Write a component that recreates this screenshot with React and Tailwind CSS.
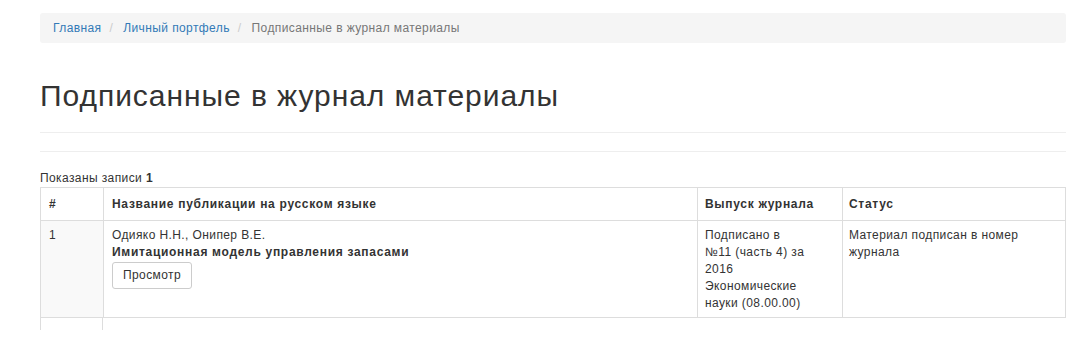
const crumbs = [
  { label: "Главная", href: "#" },
  { label: "Личный портфель", href: "#" },
  { label: "Подписанные в журнал материалы" },
];

const rows = [
  {
    n: 1,
    authors: "Одияко Н.Н., Онипер В.Е.",
    title: "Имитационная модель управления запасами",
    issue: ["Подписано в", "№11 (часть 4) за", "2016", "Экономические", "науки (08.00.00)"],
    status: "Материал подписан в номер журнала",
  },
];

export default function App() {
  return (
    <div className="min-h-[364px] bg-white pl-[40px] pr-[10px] pt-[13px] text-[12px] leading-[17px] tracking-[0.4px] text-[#333] font-['Liberation_Sans',Arial,sans-serif]">
      {/* Breadcrumb */}
      <ol className="flex h-[30px] items-center bg-[#f5f5f5] px-[13px] pt-[1px] rounded-[3px]">
        {crumbs.map((c, i) => (
          <li key={c.label} className="flex items-center">
            {i > 0 && <span className="pl-[8px] pr-[10px] text-[#ccc]">/</span>}
            {c.href ? (
              <a href={c.href} className="text-[#337ab7]">{c.label}</a>
            ) : (
              <span className="text-[#777]">{c.label}</span>
            )}
          </li>
        ))}
      </ol>

      {/* Page header */}
      <div className="mt-[35px] pb-[18px] border-b border-[#eee]">
        <h1 className="text-[30px] leading-[36px] font-normal tracking-[0.95px] text-[#333]">Подписанные в журнал материалы</h1>
      </div>
      <div className="mt-[18px] border-t border-[#eee]" />

      <p className="mt-[18px] leading-[17px]">
        Показаны записи <b>1</b>
      </p>

      {/* Table */}
      <table className="w-full border-collapse border border-[#ddd]">
        <thead>
          <tr className="h-[33px] tracking-[0.7px]">
            <th className="w-[63px] border border-[#ddd] px-[8px] text-left font-bold align-middle">#</th>
            <th className="w-[594px] border border-[#ddd] px-[8px] text-left font-bold align-middle">Название публикации на русском языке</th>
            <th className="w-[145px] border border-[#ddd] px-[7px] text-left font-bold align-middle">Выпуск журнала</th>
            <th className="border border-[#ddd] px-[6px] text-left font-bold align-middle">Статус</th>
          </tr>
        </thead>
        <tbody>
          {rows.map(r => (
            <tr key={r.n}>
              <td className="border border-[#ddd] bg-[#f9f9f9] px-[8px] pt-[6px] pb-[5px] align-top">{r.n}</td>
              <td className="border border-[#ddd] px-[8px] pt-[6px] pb-[5px] align-top">
                <div>{r.authors}</div>
                <div className="font-bold tracking-[0.7px]">{r.title}</div>
                <button className="mt-[1px] h-[27px] px-[10px] border border-[#ccc] rounded-[3px] bg-white text-[12px] tracking-[0.4px] text-[#333]">
                  Просмотр
                </button>
              </td>
              <td className="border border-[#ddd] px-[7px] pt-[6px] pb-[5px] align-top">
                {r.issue.map(l => <div key={l}>{l}</div>)}
              </td>
              <td className="border border-[#ddd] px-[6px] pt-[6px] pb-[5px] align-top">{r.status}</td>
            </tr>
          ))}
        </tbody>
      </table>
      <div className="flex h-[12px]">
        <div className="w-[63px] border-l border-r border-[#ddd]" />
      </div>
    </div>
  );
}
